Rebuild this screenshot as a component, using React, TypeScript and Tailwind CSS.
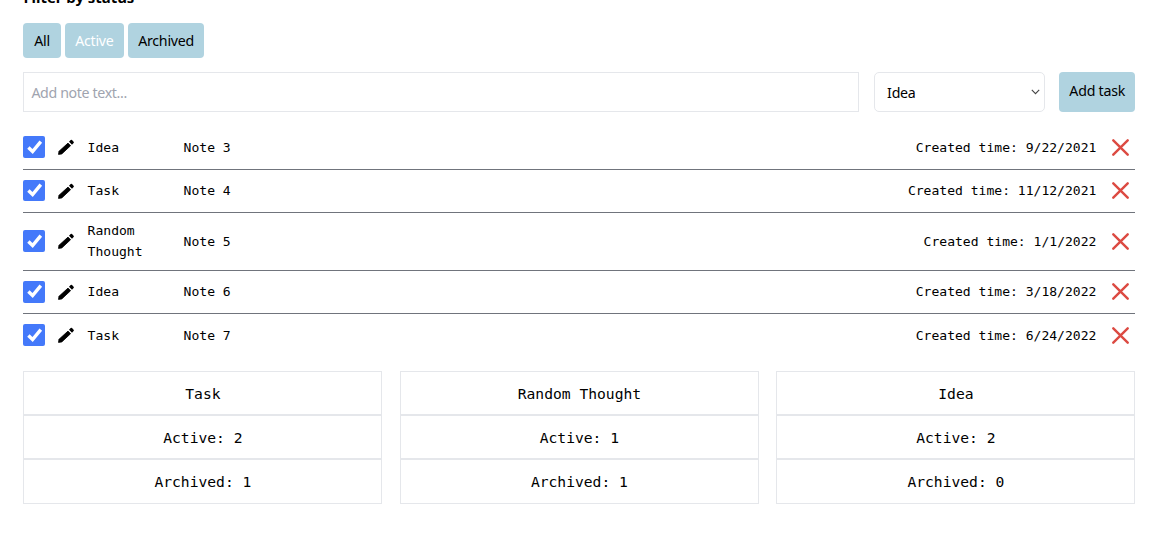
import React from "react";

const notes = [
  { type: "Idea", text: "Note 3", date: "9/22/2021", height: "h-[42.5px]" },
  { type: "Task", text: "Note 4", date: "11/12/2021", height: "h-[42.4px]" },
  { type: "Random Thought", text: "Note 5", date: "1/1/2022", height: "h-[56.8px]" },
  { type: "Idea", text: "Note 6", date: "3/18/2022", height: "h-[42.4px]" },
  { type: "Task", text: "Note 7", date: "6/24/2022", height: "h-[42.4px]" },
];

const summary = [
  { type: "Task", active: 2, archived: 1 },
  { type: "Random Thought", active: 1, archived: 1 },
  { type: "Idea", active: 2, archived: 0 },
];

const button = "rounded-[4px] bg-[#b0d3e0] text-center text-[14.2px] tracking-[-0.25px] whitespace-nowrap";

function Check() {
  return (
    <span className="flex size-[21.6px] shrink-0 items-center justify-center rounded-[2px] bg-[#4479fa]">
      <svg width="21" height="21" viewBox="0 0 21 21" fill="none" stroke="white" strokeWidth="3.4">
        <path d="M4.4 10.6 8.6 14.6 16.8 4.6" />
      </svg>
    </span>
  );
}

function Pencil() {
  return (
    <svg className="ml-[12px] shrink-0" width="18" height="18" viewBox="0 0 18 18" fill="black">
      <path d="M1.5 16.4 2 13.3 11 5.1 13.6 7.7 4.8 15.9 Z" strokeLinejoin="round" stroke="black" strokeWidth=".8" />
      <path d="m12 3.8 1.7-1.7q.6-.6 1.3 0l1.6 1.6q.7.7 0 1.3L15 6.7Z" />
    </svg>
  );
}

function Cross() {
  return (
    <svg className="mr-[6px] ml-[16px] shrink-0" width="17" height="17" viewBox="0 0 17 17" stroke="#dc4a42" strokeWidth="2.4" strokeLinecap="round">
      <path d="M1.3 1.3 15.7 15.7M15.7 1.3 1.3 15.7" />
    </svg>
  );
}

export default function App() {
  return (
    <main className="h-[550px] overflow-hidden bg-white pr-[22.6px] pl-[23.4px] font-['Noto_Sans',sans-serif] text-black">
      <h2 className="-mt-[13px] h-[36px] text-[14.9px] leading-[20px] font-bold">Filter by status</h2>
      <div className="flex h-[35px] gap-[4px]">
        <button className={`${button} w-[37.2px]`}>All</button>
        <button className={`${button} w-[59.5px] text-white`}>Active</button>
        <button className={`${button} w-[76px]`}>Archived</button>
      </div>
      <form className="mt-[14px] flex h-[40px]" onSubmit={(e) => e.preventDefault()}>
        <input
          className="w-[836px] border border-gray-200 px-[7px] pt-[2px] text-[14.2px] tracking-[-0.36px] placeholder:text-[#a0a4af]"
          placeholder="Add note text..."
        />
        <div className="ml-[14.2px] flex w-[171.4px] items-center justify-between rounded-[5px] border border-gray-200 pt-[2px] pr-[4px] pl-[12.5px] text-[14.2px] tracking-[-0.25px]">
          Idea
          <svg width="9" height="6" viewBox="0 0 9 6" fill="none" stroke="#444" strokeWidth="1.1" className="-mt-[3px]">
            <path d="m.8.8 3.7 3.8L8.2.8" />
          </svg>
        </div>
        <button className={`${button} ml-[14px] grow pb-[2px]`}>Add task</button>
      </form>
      <ul className="mt-[14px] divide-y divide-[#70747c] font-['DejaVu_Sans_Mono',monospace] text-[13.05px] leading-[21.3px]">
        {notes.map((n) => (
          <li key={n.text} className={`${n.height} box-content flex items-center`}>
            <Check />
            <Pencil />
            <span className="ml-[12.6px] w-[96px] shrink-0 pr-[30px]">{n.type}</span>
            <span className="grow">{n.text}</span>
            <span>Created time: {n.date}</span>
            <Cross />
          </li>
        ))}
      </ul>
      <div className="mt-[14.6px] grid grid-cols-3 gap-[17.5px] text-center font-['DejaVu_Sans_Mono',monospace] text-[14.65px]">
        {summary.map((s) => (
          <div key={s.type} className="divide-y-2 divide-gray-200 border border-gray-200">
            <p className="h-[44px] leading-[43px]">{s.type}</p>
            <p className="h-[44px] leading-[43px]">Active: {s.active}</p>
            <p className="h-[43px] leading-[43px]">Archived: {s.archived}</p>
          </div>
        ))}
      </div>
    </main>
  );
}
